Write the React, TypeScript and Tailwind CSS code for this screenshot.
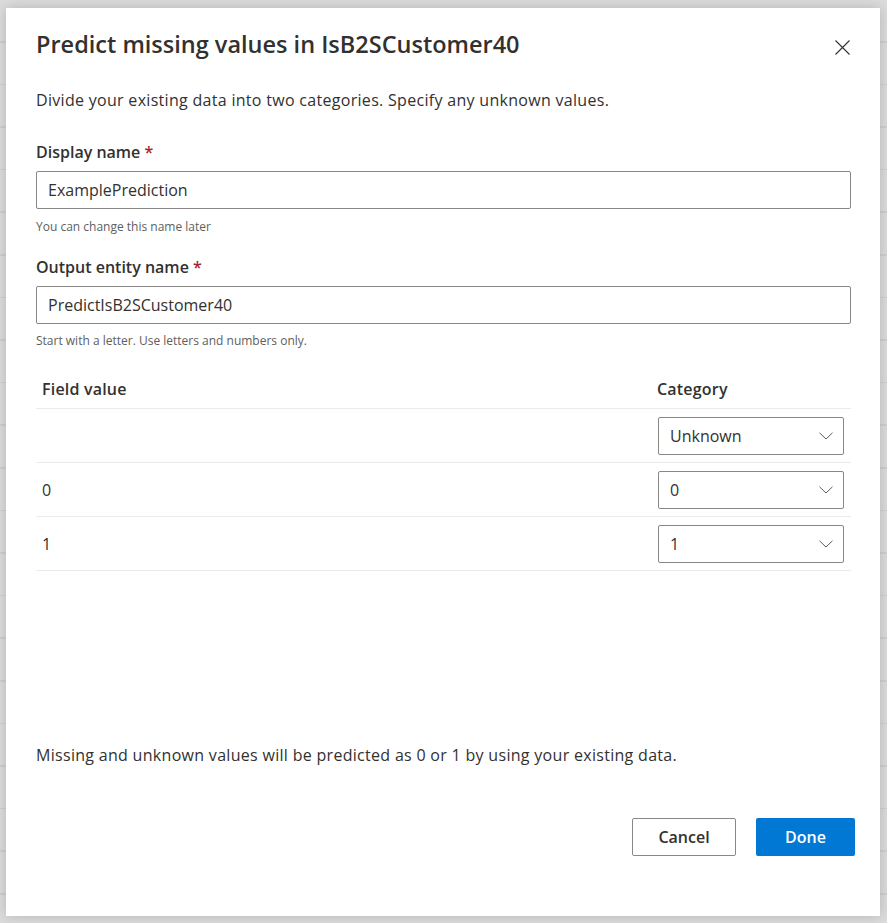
import React from "react";

const font = { fontFamily: '"Open Sans", "Noto Sans", sans-serif' };

function Chevron() {
  return (
    <svg width="14" height="8" viewBox="0 0 14 8" fill="none" className="shrink-0">
      <path d="M0.5 0.8 L7 7 L13.5 0.8" stroke="#605e5c" strokeWidth="1" />
    </svg>
  );
}

function Select({ value }: { value: string }) {
  return (
    <div className="flex h-[38px] w-[186px] items-center justify-between rounded-[2px] border border-[#8a8886] bg-white pl-[11px] pr-[10px] text-[16px] text-[#323130]">
      <span>{value}</span>
      <Chevron />
    </div>
  );
}

function Row({ field, value }: { field: string; value: string }) {
  return (
    <div className="flex h-[54px] items-center justify-between border-b border-[#edebe9] pl-[6px] pr-[7px]">
      <span className="text-[16px] text-[#323130]">{field}</span>
      <Select value={value} />
    </div>
  );
}

export default function App() {
  return (
    <div
      className="h-[923px] w-[887px] overflow-hidden bg-[#dcdcdc] bg-[repeating-linear-gradient(to_bottom,transparent_0px,transparent_41px,#cfcfcf_41px,#cfcfcf_42.6px)] pl-[6px] pt-[8px]"
      style={font}
    >
      <div className="flex h-[908px] w-[874px] flex-col bg-white pl-[30px] pr-[25px] shadow-[0_0_12px_rgba(0,0,0,0.18)]">
        <div className="flex h-[72px] items-start justify-between pt-[20px]">
          <h1 className="text-[23.5px] font-semibold leading-[32px] text-[#323130]">
            Predict missing values in IsB2SCustomer40
          </h1>
          <button className="mr-[5px] mt-[11px] flex h-[16px] w-[16px] items-center justify-center">
            <svg width="15" height="15" viewBox="0 0 15 15" fill="none">
              <path d="M0.5 0.5 L14.5 14.5 M14.5 0.5 L0.5 14.5" stroke="#323130" strokeWidth="1.1" />
            </svg>
          </button>
        </div>
        <p className="mt-[8px] text-[16px] leading-[24px] tracking-[0.3px] text-[#323130]">
          Divide your existing data into two categories. Specify any unknown values.
        </p>
        <div className="mr-[4px]">
          <label className="mt-[28px] block text-[16px] font-semibold leading-[24px] text-[#323130]">
            Display name <span className="text-[#a4262c]">*</span>
          </label>
          <div className="mt-[7px] flex h-[38px] items-center rounded-[2px] border border-[#8a8886] px-[11px] text-[16px] text-[#323130]">
            ExamplePrediction
          </div>
          <p className="mt-[10px] text-[12px] leading-[16px] text-[#605e5c]">You can change this name later</p>
          <label className="mt-[20px] block text-[16px] font-semibold leading-[24px] text-[#323130]">
            Output entity name <span className="text-[#a4262c]">*</span>
          </label>
          <div className="mt-[7px] flex h-[38px] items-center rounded-[2px] border border-[#8a8886] px-[11px] text-[16px] text-[#323130]">
            PredictIsB2SCustomer40
          </div>
          <p className="mt-[9px] text-[12px] leading-[16px] text-[#605e5c]">
            Start with a letter. Use letters and numbers only.
          </p>
          <div className="mt-[20px]">
            <div className="flex h-[40px] items-center justify-between border-b border-[#edebe9] pl-[6px] text-[16px] font-semibold tracking-[0.2px] text-[#323130]">
              <span>Field value</span>
              <span className="w-[194px]">Category</span>
            </div>
            <Row field="" value="Unknown" />
            <Row field="0" value="0" />
            <Row field="1" value="1" />
          </div>
        </div>
        <p className="mt-[172px] text-[16px] leading-[24px] tracking-[0.3px] text-[#323130]">
          Missing and unknown values will be predicted as 0 or 1 by using your existing data.
        </p>
        <div className="mt-[51px] flex justify-end gap-[20px]">
          <button className="h-[38px] w-[104px] rounded-[2px] border border-[#8a8886] bg-white text-[16px] font-semibold text-[#323130]">
            Cancel
          </button>
          <button className="h-[38px] w-[99px] rounded-[2px] bg-[#0078d4] text-[16px] font-semibold text-white">
            Done
          </button>
        </div>
      </div>
    </div>
  );
}
